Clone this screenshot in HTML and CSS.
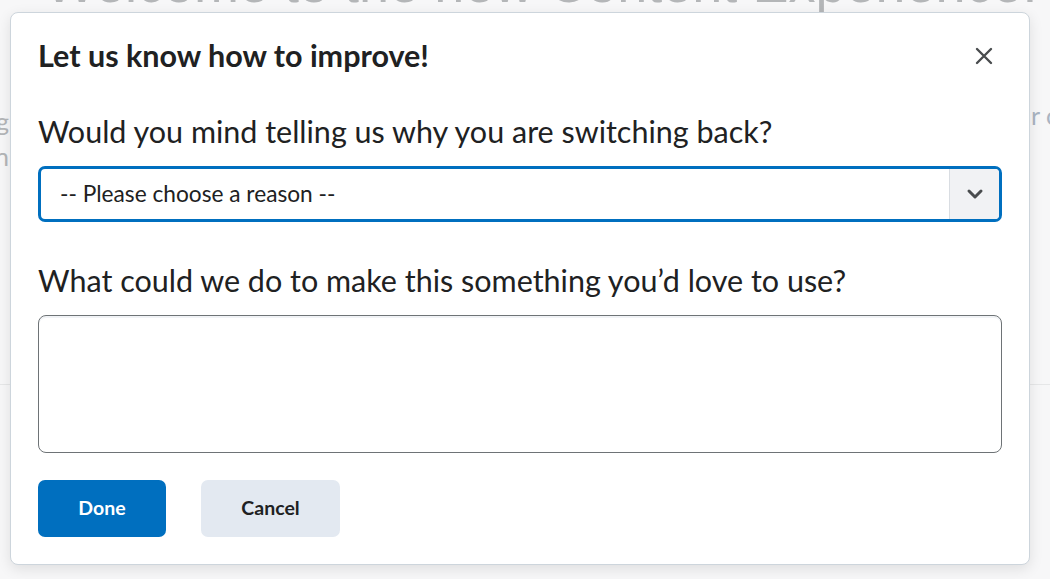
FILE: index.html
```html
<!DOCTYPE html>
<html>

<head>
  <meta charset="UTF-8" />
  <meta name="viewport" content="width=device-width, initial-scale=1.0">
  <title>Content - Feedback</title>
  <link rel="stylesheet" href="styles.css">
</head>

<body>
  <div class="page">
    <h1 class="page-title">Welcome to the new Content Experience!</h1>
    <div class="page-intro">
      <p class="intro-left">Try something new and exciting</p>
      <p class="intro-left">Change is often a lot of fun</p>
      <p class="intro-right">r c</p>
    </div>
    <hr class="page-rule">
  </div>

  <div class="backdrop">
    <div class="dialog" role="dialog" aria-labelledby="dialog-title">
      <div class="dialog-header">
        <h2 id="dialog-title">Let us know how to improve!</h2>
        <button class="close-btn" type="button" aria-label="Close">
          <svg width="18" height="18" viewBox="0 0 18 18">
            <path d="M2 2 L16 16 M16 2 L2 16" stroke="#494c4e" stroke-width="2.4" stroke-linecap="round" fill="none" />
          </svg>
        </button>
      </div>

      <form class="dialog-body">
        <label class="field-label" for="reason">Would you mind telling us why you are switching back?</label>
        <div class="select-wrap">
          <select id="reason" name="reason">
            <option>-- Please choose a reason --</option>
            <option>I don't have time to learn something new</option>
            <option>Something is missing</option>
            <option>Other</option>
          </select>
          <span class="select-arrow">
            <svg width="18" height="12" viewBox="0 0 18 12">
              <path d="M3 3 L9 9 L15 3" stroke="#494c4e" stroke-width="3" stroke-linecap="round" stroke-linejoin="round" fill="none" />
            </svg>
          </span>
        </div>

        <label class="field-label" for="feedback">What could we do to make this something you’d love to use?</label>
        <textarea id="feedback" name="feedback"></textarea>

        <div class="dialog-buttons">
          <button type="button" class="btn btn-primary">Done</button>
          <button type="button" class="btn btn-secondary">Cancel</button>
        </div>
      </form>
    </div>
  </div>
</body>

</html>
```

FILE: styles.css
```css
* {
  margin: 0;
  padding: 0;
  box-sizing: border-box;
}

body {
  background-color: #f7f7f8;
  font-family: Lato, "Open Sans", sans-serif;
  color: #202122;
  overflow: hidden;
  height: 579px;
}

/* faded page behind the dialog */
.page {
  color: #b4b6b8;
}

.page-title {
  font-family: "Liberation Sans", Arial, sans-serif;
  font-weight: normal;
  font-size: 54px;
  line-height: 60px;
  margin-top: -47px;
  padding-left: 45px;
  white-space: nowrap;
}

.page-intro {
  margin-top: 91px;
  font-family: Lato, sans-serif;
  font-size: 25px;
  line-height: 35px;
  position: relative;
}

.intro-left {
  white-space: nowrap;
  direction: rtl;
  width: 9px;
  overflow: hidden;
  text-align: left;
}

.intro-right {
  position: absolute;
  top: -6px;
  left: 1031px;
  white-space: nowrap;
  color: #aab4c2;
}

.page-rule {
  border: none;
  border-top: 1px solid #e6e7e8;
  margin-top: 210px;
}

.backdrop {
  position: absolute;
  top: 0;
  left: 0;
  width: 100%;
  height: 100%;
}

.dialog {
  position: absolute;
  top: 12px;
  left: 10px;
  width: 1020px;
  height: 553px;
  background: #fff;
  border: 1px solid #cdd5dc;
  border-radius: 8px;
  box-shadow: 0 4px 14px rgba(0, 0, 0, 0.1);
  padding: 0 27px 0 27px;
}

.dialog-header {
  display: flex;
  align-items: flex-start;
  justify-content: space-between;
  height: 98px;
  padding-top: 22px;
}

.dialog-header h2 {
  font-size: 30.5px;
  line-height: 40px;
  font-weight: bold;
  color: #202122;
}

.close-btn {
  border: none;
  background: none;
  width: 36px;
  height: 36px;
  display: flex;
  align-items: center;
  justify-content: center;
  margin-top: 3px;
  cursor: pointer;
}

.dialog-body {
  display: flex;
  flex-direction: column;
}

.field-label {
  font-size: 30.5px;
  line-height: 40px;
  color: #202122;
  margin-bottom: 15px;
}

.select-wrap {
  position: relative;
  height: 56px;
  margin-bottom: 38px;
}

.select-wrap select {
  appearance: none;
  -webkit-appearance: none;
  width: 100%;
  height: 100%;
  border: 3px solid #006fbf;
  border-radius: 7px;
  background: #fff;
  font-family: Lato, sans-serif;
  font-size: 22.7px;
  color: #202122;
  padding: 0 60px 2px 19px;
}

.select-arrow {
  position: absolute;
  top: 3px;
  right: 3px;
  bottom: 3px;
  width: 50px;
  background: #f1f2f4;
  border-left: 1px solid #d9dde2;
  border-radius: 0 4px 4px 0;
  display: flex;
  align-items: center;
  justify-content: center;
}

textarea {
  height: 138px;
  border: 1px solid #6e7376;
  border-radius: 8px;
  box-shadow: inset 0 2px 0 0 rgba(185, 194, 208, 0.2);
  resize: none;
  font-family: Lato, sans-serif;
  font-size: 20px;
  padding: 10px 14px;
  margin-bottom: 27px;
}

.dialog-buttons {
  display: flex;
  gap: 35px;
}

.btn {
  height: 57px;
  border: none;
  border-radius: 7px;
  font-family: Lato, sans-serif;
  font-weight: bold;
  font-size: 19.5px;
  padding-bottom: 2px;
  cursor: pointer;
}

.btn-primary {
  width: 128px;
  background-color: #006fbf;
  color: #fff;
}

.btn-secondary {
  width: 139px;
  background-color: #e3e9f1;
  color: #202122;
}
```
